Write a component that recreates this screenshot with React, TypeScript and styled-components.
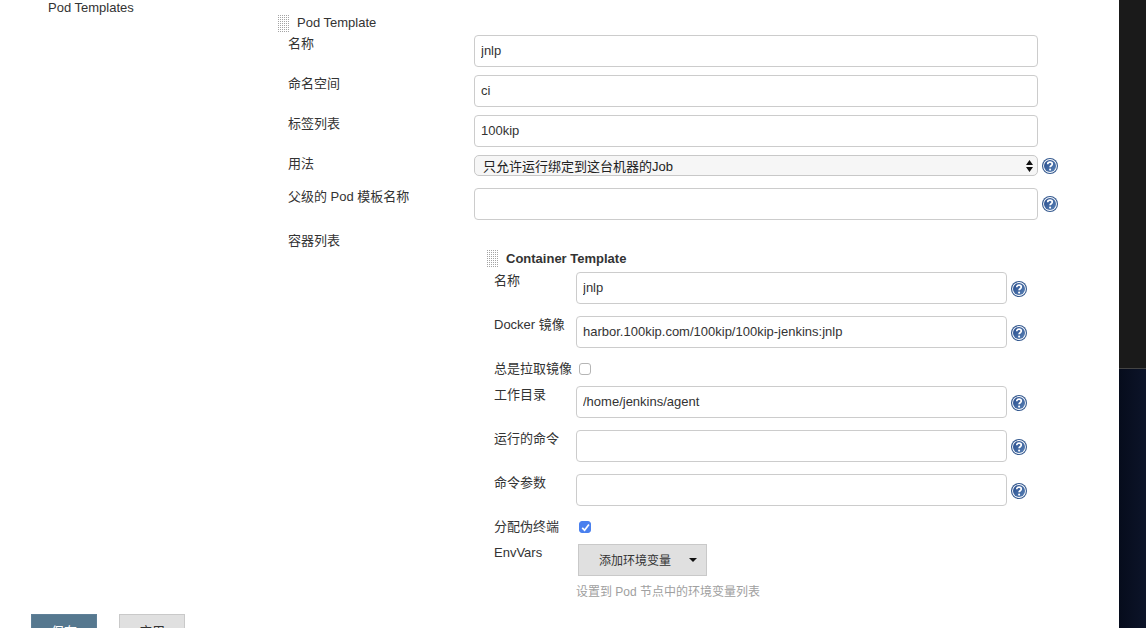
import React from "react";
import styled, { createGlobalStyle } from "styled-components";

const GlobalStyle = createGlobalStyle`
  html, body {
    margin: 0;
    padding: 0;
    height: 628px;
    overflow: hidden;
    background: #fff;
  }
  body {
    font-family: "Liberation Sans", "Noto Sans CJK SC", sans-serif;
    font-size: 13px;
    color: #333;
  }
  * {
    box-sizing: border-box;
  }
`;

function HelpIcon() {
  return (
    <HelpSvg viewBox="0 0 16 16">
      <defs>
        <linearGradient id="helpFill" x1="0" y1="0" x2="1" y2="1">
          <stop offset="0" stopColor="#264b8c" />
          <stop offset="1" stopColor="#5a82b6" />
        </linearGradient>
      </defs>
      <circle cx="8" cy="8" r="8" fill="#34598f" />
      <circle cx="8" cy="8" r="6.9" fill="#fff" />
      <circle cx="8" cy="8" r="6" fill="url(#helpFill)" />
      <path
        d="M5.7 6.2c0-1.3 1.1-2 2.3-2s2.3.7 2.3 1.9c0 1.6-2.2 1.7-2.2 3.2"
        fill="none"
        stroke="#fff"
        strokeWidth="1.7"
      />
      <circle cx="8.1" cy="11.6" r="1.05" fill="#fff" />
    </HelpSvg>
  );
}

function UpDown() {
  return (
    <svg width="7" height="12" viewBox="0 0 7 12">
      <path d="M3.5 0 7 5H0zM3.5 12 0 7h7z" fill="#111" />
    </svg>
  );
}

interface RowProps {
  label: string;
  value?: string;
}

function PodRow({ label, value = "" }: RowProps) {
  return (
    <PodFieldRow>
      <PodLabel>{label}</PodLabel>
      <TextInput readOnly value={value} />
    </PodFieldRow>
  );
}

function ContainerRow({ label, value = "" }: RowProps) {
  return (
    <ContainerFieldRow>
      <ContainerLabel>{label}</ContainerLabel>
      <TextInput readOnly value={value} />
      <HelpIcon />
    </ContainerFieldRow>
  );
}

export default function App() {
  return (
    <>
      <GlobalStyle />
      <Page>
        <Main>
          <ConfigArea>
            <SectionTitle>Pod Templates</SectionTitle>
            <PodTemplate>
              <BlockHeader>
                <GripBox />
                <HeaderText>Pod Template</HeaderText>
              </BlockHeader>
              <PodFields>
                <PodRow label="名称" value="jnlp" />
                <PodRow label="命名空间" value="ci" />
                <PodRow label="标签列表" value="100kip" />
                <SelectRow>
                  <PodLabel>用法</PodLabel>
                  <SelectBox>
                    <SelectText>只允许运行绑定到这台机器的Job</SelectText>
                    <UpDown />
                  </SelectBox>
                  <HelpIcon />
                </SelectRow>
                <PodFieldRow>
                  <PodLabel>父级的 Pod 模板名称</PodLabel>
                  <TextInput readOnly value="" />
                  <HelpIcon />
                </PodFieldRow>
              </PodFields>
              <ContainersRow>
                <PodLabel>容器列表</PodLabel>
                <ContainerTemplate>
                  <ContainerHeader>
                    <GripBox />
                    <strong>Container Template</strong>
                  </ContainerHeader>
                  <ContainerFields>
                    <ContainerRow label="名称" value="jnlp" />
                    <ContainerRow
                      label="Docker 镜像"
                      value="harbor.100kip.com/100kip/100kip-jenkins:jnlp"
                    />
                    <CheckRow>
                      <ContainerLabel>总是拉取镜像</ContainerLabel>
                      <CheckBox />
                    </CheckRow>
                    <ContainerRow label="工作目录" value="/home/jenkins/agent" />
                    <ContainerRow label="运行的命令" />
                    <ContainerRow label="命令参数" />
                    <CheckRow>
                      <ContainerLabel>分配伪终端</ContainerLabel>
                      <CheckBox $checked>
                        <svg width="9" height="9" viewBox="0 0 9 9">
                          <path d="M1.2 4.8 3.6 7.2 7.9 1.6" fill="none" stroke="#fff" strokeWidth="1.7" />
                        </svg>
                      </CheckBox>
                    </CheckRow>
                    <EnvRow>
                      <ContainerLabel>EnvVars</ContainerLabel>
                      <div>
                        <AddButton>
                          <span>添加环境变量</span>
                          <Caret />
                        </AddButton>
                        <HintText>设置到 Pod 节点中的环境变量列表</HintText>
                      </div>
                    </EnvRow>
                  </ContainerFields>
                </ContainerTemplate>
              </ContainersRow>
            </PodTemplate>
          </ConfigArea>
          <SaveBar>
            <SaveButton>保存</SaveButton>
            <ApplyButton>应用</ApplyButton>
          </SaveBar>
        </Main>
        <SidePanel>
          <SideTop />
          <SideBottom />
        </SidePanel>
      </Page>
    </>
  );
}

const Page = styled.div`
  display: flex;
  width: 1146px;
  height: 628px;
  overflow: hidden;
`;

const Main = styled.div`
  position: relative;
  flex: 0 0 1119px;
  height: 628px;
  overflow: hidden;
  background: #fff;
`;

const ConfigArea = styled.div`
  display: flex;
  padding-left: 48px;
`;

const SectionTitle = styled.div`
  flex: 0 0 230px;
  line-height: 15px;
`;

const PodTemplate = styled.div`
  flex: 0 0 780px;
  padding-top: 15px;
`;

const BlockHeader = styled.div`
  display: flex;
  align-items: center;
  gap: 8px;
  height: 17px;
`;

const HeaderText = styled.span`
  margin-top: -2px;
`;

const GripBox = styled.div`
  width: 11px;
  height: 17px;
  flex: none;
  background: conic-gradient(#a4a4a4 25%, transparent 0) 1px 0 / 2px 2px;
`;

const PodFields = styled.div`
  display: flex;
  flex-direction: column;
  gap: 8px;
  margin-top: 3px;
  padding-left: 10px;
`;

const PodFieldRow = styled.div`
  display: grid;
  grid-template-columns: 186px 564px auto;
  align-items: start;

  > svg {
    margin: 8px 0 0 4px;
  }
`;

const SelectRow = styled(PodFieldRow)`
  margin-bottom: 4px;

  > svg {
    margin-top: 3px;
  }
`;

const PodLabel = styled.div`
  line-height: 17px;
  white-space: nowrap;
`;

const TextInput = styled.input`
  width: 100%;
  height: 32px;
  padding: 0 6px 2px;
  border: 1px solid #ccc;
  border-radius: 4px;
  background: #fff;
  font: 13px "Liberation Sans", "Noto Sans CJK SC", sans-serif;
  color: #333;
  outline: none;
`;

const SelectBox = styled.div`
  display: flex;
  align-items: center;
  justify-content: space-between;
  height: 21px;
  padding: 0 4px 0 8px;
  border: 1px solid #c8c8c8;
  border-radius: 5px;
  background: #f6f6f6;
  color: #222;
  line-height: 19px;
`;

const SelectText = styled.span`
  padding-top: 1px;
`;

const HelpSvg = styled.svg`
  width: 16px;
  height: 16px;
  flex: none;
`;

const ContainersRow = styled.div`
  display: grid;
  grid-template-columns: 186px 1fr;
  margin-top: 12px;
  padding-left: 10px;
`;

const ContainerTemplate = styled.div`
  padding: 18px 0 0 13px;
`;

const ContainerHeader = styled(BlockHeader)`
  margin-bottom: 5px;
`;

const ContainerFields = styled.div`
  display: flex;
  flex-direction: column;
  padding-left: 6px;
`;

const ContainerFieldRow = styled.div`
  display: grid;
  grid-template-columns: 83px 431px auto;
  align-items: start;
  margin-bottom: 12px;

  > svg {
    margin: 9px 0 0 4px;
  }
`;

const ContainerLabel = styled.div`
  padding-left: 1px;
  line-height: 17px;
  white-space: nowrap;
`;

const CheckRow = styled.div`
  display: grid;
  grid-template-columns: 86px auto;
  justify-content: start;
  align-items: center;
  height: 17px;
  margin-bottom: 9px;
`;

const CheckBox = styled.span<{ $checked?: boolean }>`
  display: inline-flex;
  align-items: center;
  justify-content: center;
  width: 12px;
  height: 12px;
  margin-top: 1px;
  border-radius: 3px;
  border: 1px solid ${(p) => (p.$checked ? "#4a80ee" : "#b5b5b5")};
  background: ${(p) => (p.$checked ? "#4a80ee" : "#fff")};
`;

const EnvRow = styled.div`
  display: grid;
  grid-template-columns: 83px 1fr;
`;

const AddButton = styled.div`
  display: flex;
  align-items: center;
  justify-content: space-between;
  width: 129px;
  height: 32px;
  margin-left: 2px;
  padding: 0 9px 2px 20px;
  border: 1px solid #c9c9c9;
  background: #e0e0e0;
  color: #333;
  font-size: 12px;
`;

const Caret = styled.span`
  width: 0;
  height: 0;
  margin-top: 2px;
  border-left: 4px solid transparent;
  border-right: 4px solid transparent;
  border-top: 4px solid #111;
`;

const HintText = styled.div`
  margin-top: 8px;
  font-size: 12px;
  line-height: 16px;
  color: #a0a0a0;
  white-space: nowrap;
`;

const SaveBar = styled.div`
  position: absolute;
  left: 31px;
  top: 614px;
  display: flex;
  gap: 22px;
`;

const SaveButton = styled.div`
  display: flex;
  align-items: center;
  justify-content: center;
  width: 66px;
  height: 32px;
  background: #56788f;
  border: 1px solid #5f8098;
  color: #fff;
`;

const ApplyButton = styled(SaveButton)`
  background: #e0e0e0;
  border-color: #c9c9c9;
  color: #333;
`;

const SidePanel = styled.div`
  flex: 0 0 27px;
  display: flex;
  flex-direction: column;
  height: 628px;
`;

const SideTop = styled.div`
  height: 369px;
  background: #1a1a1a;
  border-bottom: 1px solid #444;
`;

const SideBottom = styled.div`
  flex: 1;
  background: linear-gradient(90deg, #060c1c, #0c1429);
`;
